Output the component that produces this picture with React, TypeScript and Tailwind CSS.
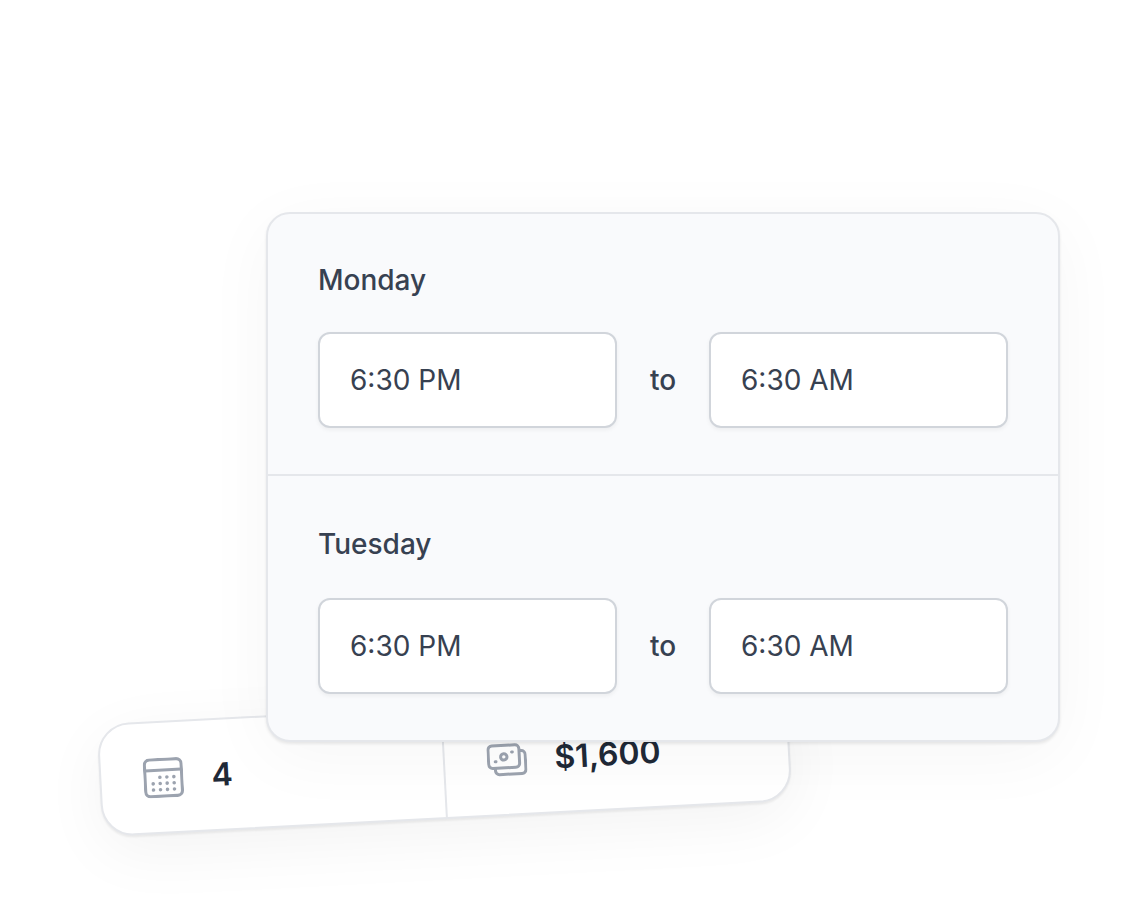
import type { ReactNode } from 'react';

const days = [
  { name: 'Monday', from: '6:30 PM', to: '6:30 AM', spacing: 'gap-8 pt-[46px]' },
  { name: 'Tuesday', from: '6:30 PM', to: '6:30 AM', spacing: 'gap-[34px] pt-12' },
];

const CalendarIcon = () => (
  <svg viewBox="0 0 40 40" className="w-10 h-10 shrink-0 text-[#9ca3af]" fill="none" aria-hidden="true">
    <rect x="1.6" y="1.6" width="36.8" height="36.8" rx="5" stroke="currentColor" strokeWidth="3.1" />
    <path d="M2 12.3h36" stroke="currentColor" strokeWidth="3" />
    <g fill="currentColor">
      <circle cx="16.5" cy="19.4" r="1.8" />
      <circle cx="23.5" cy="19.4" r="1.8" />
      <circle cx="30.5" cy="19.4" r="1.8" />
      <circle cx="9.5" cy="25.6" r="1.8" />
      <circle cx="16.5" cy="25.6" r="1.8" />
      <circle cx="23.5" cy="25.6" r="1.8" />
      <circle cx="30.5" cy="25.6" r="1.8" />
      <circle cx="9.5" cy="31.8" r="1.8" />
      <circle cx="16.5" cy="31.8" r="1.8" />
      <circle cx="23.5" cy="31.8" r="1.8" />
      <circle cx="30.5" cy="31.8" r="1.8" />
    </g>
  </svg>
);

const CashIcon = () => (
  <svg
    viewBox="0 0 40 40"
    className="w-10 h-10 shrink-0 text-[#9ca3af]"
    fill="none"
    stroke="currentColor"
    strokeWidth="3"
    strokeLinecap="round"
    strokeLinejoin="round"
    aria-hidden="true"
  >
    <rect x="1.5" y="5.5" width="31" height="22.5" rx="4" />
    <path d="M33 11.5h1.5a4 4 0 0 1 4 4V30.5a4 4 0 0 1-4 4H12a4 4 0 0 1-4-4V28.5" />
    <circle cx="17" cy="17" r="3.2" />
    <path d="M25 12.5h.8M8.2 21.5h.8" />
  </svg>
);

const Stat = ({ icon, value }: { icon: ReactNode; value: string }) => (
  <div className="flex items-center gap-7 pl-[42px]">
    {icon}
    <p className="text-[32px] leading-10 font-semibold text-[#1f2937]">{value}</p>
  </div>
);

const TimeInput = ({ label, value }: { label: string; value: string }) => (
  <input
    type="text"
    aria-label={label}
    defaultValue={value}
    className="min-w-0 flex-1 h-24 px-[30px] rounded-xl border-2 border-[#d1d5db] bg-white text-[28px] text-[#374151] shadow-[0_2px_4px_rgba(0,0,0,0.05)]"
  />
);

const App = () => {
  return (
    <main className="bg-white pt-[212px] pl-[99px] pb-24 font-['Inter',sans-serif] overflow-hidden">
      <div className="relative z-10 ml-[167px] mr-16 rounded-3xl border-2 border-[#e5e7eb] bg-[#f9fafc] divide-y-2 divide-[#e5e7eb] shadow-[0_2px_3px_rgba(0,0,0,0.08),0_14px_70px_rgba(0,0,0,0.04)]">
        {days.map((day) => (
          <section key={day.name} className={`flex flex-col px-[50px] pb-[46px] ${day.spacing}`}>
            <h2 className="text-[28px] leading-10 font-medium text-[#374151]">{day.name}</h2>
            <div className="flex items-center">
              <TimeInput label={`${day.name} start`} value={day.from} />
              <span className="w-[92px] text-center text-[28px] font-medium text-[#374151]">to</span>
              <TimeInput label={`${day.name} end`} value={day.to} />
            </div>
          </section>
        ))}
      </div>

      {/* Summary, tucked under the schedule card */}
      <div className="-mt-9 mr-[334px] h-[113px] grid grid-cols-2 divide-x-2 divide-[#e5e7eb] -rotate-3 rounded-[32px] border-2 border-[#e5e7eb] bg-white shadow-[0_2px_2px_rgba(0,0,0,0.06),0_16px_64px_rgba(0,0,0,0.05)]">
        <Stat icon={<CalendarIcon />} value="4" />
        <Stat icon={<CashIcon />} value="$1,600" />
      </div>
    </main>
  );
};

export default App;
